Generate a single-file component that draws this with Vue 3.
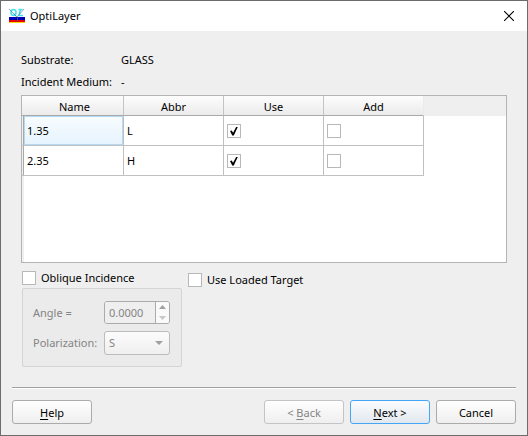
<script setup>
import { ref } from 'vue'

const layers = ref([
  { name: '1.35', abbr: 'L', use: true, add: false },
  { name: '2.35', abbr: 'H', use: true, add: false }
])
const selected = ref(0)
const oblique = ref(false)
const loadedTarget = ref(false)
const angle = ref('0.0000')
const polarization = ref('S')
</script>

<template>
  <main class="window">
    <header class="titlebar">
      <svg class="logo" width="16" height="16" viewBox="0 0 16 16" aria-hidden="true" shape-rendering="crispEdges">
        <rect x="0" y="9" width="16" height="3" fill="#0000b8" />
        <rect x="0" y="12" width="16" height="2" fill="#e80000" />
        <rect x="0" y="14" width="16" height="1" fill="#ffd800" />
        <g fill="none" stroke="#3ce4f0" stroke-width="1.5" shape-rendering="auto">
          <ellipse cx="4.500" cy="4.500" rx="2.500" ry="3" />
          <path d="M5 6l2 2M9.500 1.500h4M11.500 1.500L10 7.500h4" />
        </g>
        <path d="M0 1l8 8 7-8M8.500 9v5" fill="none" stroke="#506878" stroke-width="0.6" shape-rendering="auto" />
      </svg>
      <h1 class="title">OptiLayer</h1>
      <button class="close" type="button" aria-label="Close">
        <svg width="10" height="10" viewBox="0 0 10 10" aria-hidden="true">
          <path d="M0 0l10 10M10 0L0 10" stroke="#000" stroke-width="1.1" />
        </svg>
      </button>
    </header>

    <section class="content">
      <dl class="info">
        <dt>Substrate:</dt>
        <dd>GLASS</dd>
        <dt>Incident Medium:</dt>
        <dd>-</dd>
      </dl>

      <div class="grid">
        <table>
          <thead>
            <tr>
              <th class="first">Name</th>
              <th>Abbr</th>
              <th>Use</th>
              <th class="last">Add</th>
              <td class="filler"></td>
            </tr>
          </thead>
          <tbody>
            <tr v-for="(layer, i) in layers" :key="layer.name">
              <td class="name" @click="selected = i">
                <div class="name-cell" :class="{ selected: selected === i }">{{ layer.name }}</div>
              </td>
              <td>{{ layer.abbr }}</td>
              <td><input v-model="layer.use" class="check" type="checkbox" :aria-label="'Use ' + layer.name" /></td>
              <td><input v-model="layer.add" class="check" type="checkbox" :aria-label="'Add ' + layer.name" /></td>
            </tr>
          </tbody>
        </table>
      </div>

      <div class="options">
        <div class="incidence">
          <label class="option">
            <input v-model="oblique" class="check" type="checkbox" />
            Oblique Incidence
          </label>
          <fieldset class="group" :disabled="!oblique" aria-label="Oblique Incidence">
            <label for="angle">Angle =</label>
            <div class="spin">
              <input id="angle" v-model="angle" type="text" />
              <div class="steps">
                <button type="button" aria-label="Increase angle">
                  <svg width="7" height="4" viewBox="0 0 7 4"><path d="M0 4L3.500 0 7 4z" fill="#a0a0a0" /></svg>
                </button>
                <button type="button" aria-label="Decrease angle">
                  <svg width="7" height="4" viewBox="0 0 7 4"><path d="M0 0L3.500 4 7 0z" fill="#c8c8c8" /></svg>
                </button>
              </div>
            </div>
            <label for="polarization">Polarization:</label>
            <div class="combo">
              <select id="polarization" v-model="polarization">
                <option>S</option>
                <option>P</option>
              </select>
              <svg class="arrow" width="8" height="4" viewBox="0 0 8 4"><path d="M0 0L4 4 8 0z" fill="#a0a0a0" /></svg>
            </div>
          </fieldset>
        </div>
        <label class="option target">
          <input v-model="loadedTarget" class="check" type="checkbox" />
          Use Loaded Target
        </label>
      </div>
    </section>

    <footer class="footer">
      <button class="push help" type="button"><u>H</u>elp</button>
      <button class="push" type="button" disabled>&lt; <u>B</u>ack</button>
      <button class="push default" type="button"><u>N</u>ext &gt;</button>
      <button class="push" type="button">Cancel</button>
    </footer>
  </main>
</template>

<style>
body {
  margin: 0;
}
</style>

<style scoped>
.window,
.window * {
  box-sizing: border-box;
}

.window {
  display: flex;
  flex-direction: column;
  min-height: 100vh;
  border: 1px solid #6c6c6c;
  background: #efefef;
  color: #000;
  font: 11px/16px "Noto Sans", "Open Sans", sans-serif;
}

button,
input,
select {
  margin: 0;
  font: inherit;
  color: inherit;
}

.titlebar {
  display: flex;
  align-items: center;
  height: 30px;
  padding: 0 8px;
  background: #fff;
}

.title {
  flex: 1;
  margin: 0 0 0 5px;
  font-size: 11px;
  font-weight: 400;
}

.close {
  display: flex;
  padding: 5px;
  border: 0;
  background: none;
}

.content {
  display: flex;
  flex: 1;
  flex-direction: column;
  padding: 18px 20px 20px;
}

.info {
  display: grid;
  grid-template-columns: 100px 1fr;
  margin: 0 0 2px;
  line-height: 22px;
  white-space: nowrap;
}

.info dd {
  margin: 0;
}

.grid {
  flex: 1;
  border: 1px solid #b4b4b4;
  background: linear-gradient(to right, #efefef 2px, #fff 2px);
}

table {
  width: 100%;
  table-layout: fixed;
  border-collapse: separate;
  border-spacing: 0;
}

th {
  width: 100px;
  height: 20px;
  padding: 2px 0 0;
  border-right: 1px solid #c4c4c4;
  border-bottom: 1px solid #a8a8a8;
  background: linear-gradient(#fdfdfd, #ebebeb);
  font-weight: 400;
}

th.first {
  width: 102px;
  padding-left: 4px;
}

th.last {
  border-right-color: #ebebeb;
}

.filler {
  padding: 0;
  background: #efefef;
}

tbody td {
  height: 30px;
  padding: 0 3px;
  border-right: 1px solid #c0c0c0;
  border-bottom: 1px solid #c0c0c0;
}

tbody .name {
  padding: 0 0 0 1px;
}

.name-cell {
  display: flex;
  align-items: center;
  height: 29px;
  padding: 0 3px;
  border-left: 1px solid #a8a8a8;
}

.name-cell.selected {
  background: linear-gradient(#f8fcff, #e6f3fd);
  box-shadow: inset 0 0 0 1px #b5d9f3;
}

.check {
  display: grid;
  flex: none;
  width: 14px;
  height: 14px;
  appearance: none;
  border: 1px solid #b8b8b8;
  background: #fff;
}

.check:checked::before {
  content: "";
  width: 8px;
  height: 9px;
  margin: 2px;
  background: #000;
  clip-path: polygon(0 50%, 22% 45%, 38% 70%, 80% 0, 100% 0, 48% 100%, 28% 100%);
}

.options {
  display: flex;
  align-items: flex-start;
  gap: 6px;
  padding: 8px 0 0 1px;
}

.option {
  display: flex;
  align-items: center;
  gap: 5px;
  height: 14px;
  line-height: 18px;
  white-space: nowrap;
}

.target {
  margin-top: 2px;
}

.group {
  display: grid;
  grid-template-columns: 71px 66px;
  gap: 7px 0;
  align-items: center;
  margin: 3px 0 0;
  padding: 12px 11px 11px 10px;
  border: 1px solid #d4d4d4;
  border-radius: 2px;
  background: #ebebeb;
}

.group:disabled {
  color: #848484;
}

.spin {
  display: flex;
  height: 23px;
  border: 1px solid #ababab;
  border-radius: 3px;
  overflow: hidden;
}

.spin input {
  flex: 1;
  min-width: 0;
  padding: 0 4px;
  border: 0;
  background: #efefef;
}

.steps {
  display: flex;
  flex-direction: column;
  width: 14px;
  border-left: 1px solid #ababab;
  background: #fafafa;
}

.steps button {
  display: flex;
  flex: 1;
  align-items: center;
  justify-content: center;
  padding: 0;
  border: 0;
  background: none;
}

.combo {
  position: relative;
  height: 24px;
}

.combo select {
  width: 100%;
  height: 100%;
  padding: 0 4px;
  appearance: none;
  border: 1px solid #bcbcbc;
  border-radius: 3px;
  background: linear-gradient(#fcfcfc, #efefef);
  opacity: 1;
}

.arrow {
  position: absolute;
  top: 10px;
  right: 7px;
  pointer-events: none;
}

.footer {
  display: flex;
  gap: 6px;
  margin: 0 11px;
  padding: 12px 0 11px;
  border-top: 1px solid #a0a0a0;
  box-shadow: inset 0 1px #fff;
}

.push {
  width: 80px;
  height: 24px;
  padding: 2px 0 0;
  border: 1px solid #ababab;
  border-radius: 3px;
  background: linear-gradient(#fefefe, #efefef);
}

.push:disabled {
  border-color: #c4c4c4;
  color: #848484;
}

.help {
  margin-right: auto;
}

.default {
  border-color: #45a5f5;
  background: linear-gradient(#fbfcfd, #e2e8ef);
}

u {
  text-underline-offset: 2px;
}
</style>
